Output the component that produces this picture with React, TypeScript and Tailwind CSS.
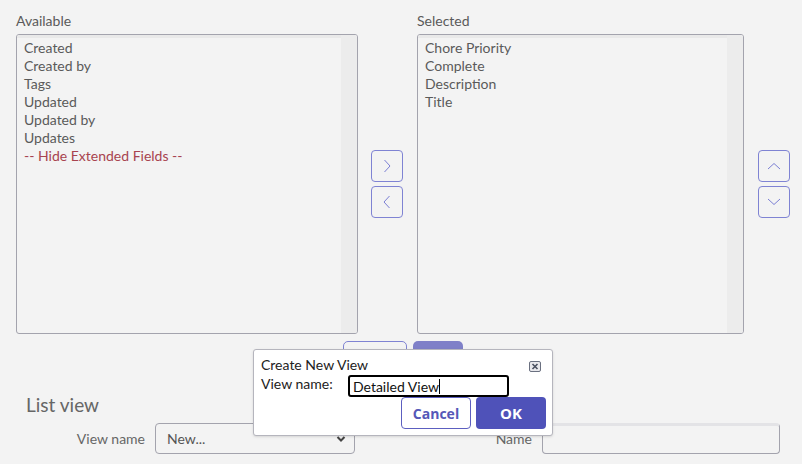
import React from "react";

const Chevron = ({ d }: { d: string }) => (
  <svg width="14" height="14" viewBox="0 0 14 14" fill="none" stroke="#7b7fd4" strokeWidth="1">
    <path d={d} />
  </svg>
);

const SmallBtn = ({ d }: { d: string }) => (
  <div className="w-[32px] h-[32px] border border-[#7f83d3] rounded-[4px] flex items-center justify-center bg-[#f3f3f3]">
    <Chevron d={d} />
  </div>
);

const ListBox = ({ items, width, red }: { items: string[]; width: string; red?: string }) => (
  <div className={`${width} h-[300px] border border-[#a3a3ad] rounded-[3px] bg-[#f3f3f3] flex overflow-hidden`}>
    <div className="flex-1 border-t-[3px] border-[#e9e9e9] pt-[1px] pl-[7px] text-[14px] leading-[18px] text-[#5a5a5a]">
      {items.map((t) => (
        <div key={t}>{t}</div>
      ))}
      {red && <div className="text-[#a8434f]">{red}</div>}
    </div>
    <div className="w-[16px] bg-[#ececec]" />
  </div>
);

export default function App() {
  return (
    <div className="relative w-[802px] h-[464px] bg-[#f3f3f3] overflow-hidden" style={{ fontFamily: "Lato, 'Noto Sans', sans-serif" }}>
      <div className="flex pl-[16px] pt-[12px]">
        <div className="flex flex-col">
          <div className="text-[14px] leading-[18px] text-[#5a5a5a] h-[22px]">Available</div>
          <ListBox
            width="w-[342px]"
            items={["Created", "Created by", "Tags", "Updated", "Updated by", "Updates"]}
            red="-- Hide Extended Fields --"
          />
        </div>
        <div className="flex flex-col justify-center gap-[4px] ml-[13px] mr-[14px] pt-[22px]">
          <SmallBtn d="M4.5 1 L10 7 L4.5 13" />
          <SmallBtn d="M9.5 1 L4 7 L9.5 13" />
        </div>
        <div className="flex flex-col">
          <div className="text-[14px] leading-[18px] text-[#5a5a5a] h-[22px]">Selected</div>
          <ListBox width="w-[327px]" items={["Chore Priority", "Complete", "Description", "Title"]} />
        </div>
        <div className="flex flex-col justify-center gap-[4px] ml-[14px] pt-[22px]">
          <SmallBtn d="M1 10 L7 4.5 L13 10" />
          <SmallBtn d="M1 4 L7 9.5 L13 4" />
        </div>
      </div>

      <div className="flex gap-[6px] pl-[343px] pt-[7px]">
        <div className="w-[64px] h-[32px] border border-[#7f83d3] rounded-[5px] bg-[#f3f3f3]" />
        <div className="w-[50px] h-[32px] rounded-[5px] bg-[#7f80c8]" />
      </div>

      <div className="pl-[26px] pt-[20px] text-[19px] leading-[24px] text-[#666]">List view</div>

      <div className="flex items-center mt-[6px]">
        <div className="w-[145px] text-right text-[14px] text-[#666]">View name</div>
        <div className="ml-[10px] w-[200px] h-[31px] border border-[#a3a3ad] rounded-[4px] bg-[#f3f3f3] flex items-center justify-between pl-[11px] pr-[8px]">
          <span className="text-[14px] text-[#555]">New...</span>
          <svg width="10" height="8" viewBox="0 0 10 8">
            <path d="M1.5 2 L5 5.5 L8.5 2" stroke="#444" strokeWidth="2" fill="none" />
          </svg>
        </div>
        <div className="w-[177px] text-right text-[14px] text-[#666]">Name</div>
        <div className="ml-[10px] w-[238px] h-[31px] border border-[#a3a3ad] border-t-[3px] border-t-[#e3e3e6] rounded-[4px] bg-[#f3f3f3]" />
      </div>

      <div className="absolute left-[253px] top-[349px] w-[300px] h-[87px] bg-white border border-[#b5b5bd] rounded-[3px] shadow-sm">
        <div className="absolute left-[7px] top-[6px] text-[14px] leading-[18px] text-[#222]">Create New View</div>
        <div className="absolute left-[7px] top-[25px] text-[14px] leading-[18px] text-[#222]">View name:</div>
        <div className="absolute right-[11px] top-[11px] w-[12px] h-[11px] border border-[#6a7080] rounded-[2px] bg-[#e8e8ec] flex items-center justify-center">
          <svg width="8" height="7" viewBox="0 0 8 7">
            <path d="M1.5 1 L6.5 6 M6.5 1 L1.5 6" stroke="#4a5060" strokeWidth="1.6" />
          </svg>
        </div>
        <div className="absolute left-[94px] top-[25px] w-[161px] h-[22px] border-2 border-black rounded-[3px] flex items-center pl-[3px] text-[14px] text-[#111]">
          Detailed View<span className="inline-block w-[1px] h-[15px] bg-black" />
        </div>
        <div className="absolute left-[147px] top-[47px] w-[70px] h-[32px] border border-[#5c5fc0] rounded-[4px] bg-white flex items-center justify-center text-[14px] font-bold text-[#5558b8]" style={{ fontFamily: "'Open Sans', Arial, sans-serif" }}>
          Cancel
        </div>
        <div className="absolute left-[222px] top-[47px] w-[70px] h-[32px] rounded-[4px] bg-[#4f52b9] flex items-center justify-center text-[15px] font-bold text-white" style={{ fontFamily: "'Open Sans', Arial, sans-serif" }}>
          OK
        </div>
      </div>
    </div>
  );
}
